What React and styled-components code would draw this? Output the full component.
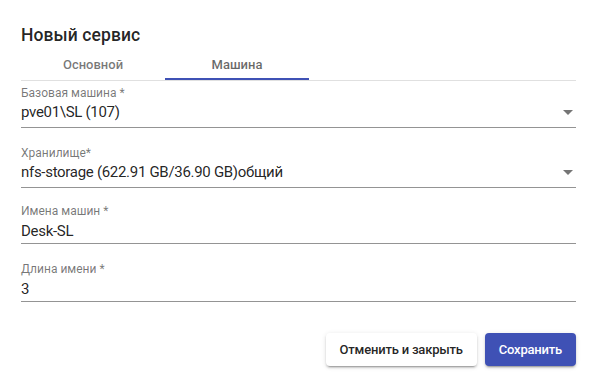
import React from "react";
import styled, { createGlobalStyle } from "styled-components";

const GlobalStyle = createGlobalStyle`
  html, body {
    margin: 0;
    padding: 0;
    background: #ffffff;
  }
  body {
    font-family: Roboto, "Noto Sans", Arial, sans-serif;
    color: rgba(0, 0, 0, 0.87);
  }
`;

const Dialog = styled.div`
  width: 598px;
  height: 380px;
  box-sizing: border-box;
  padding: 22px 22px 0 21px;
  display: flex;
  flex-direction: column;
  background: #ffffff;
`;

const Title = styled.h2`
  margin: 0;
  font-size: 17.5px;
  font-weight: 500;
  line-height: 26px;
  letter-spacing: 0.1px;
`;

const TabBar = styled.div`
  display: flex;
  height: 32px;
  border-bottom: 1px solid #e0e0e0;
`;

const Tab = styled.div`
  position: relative;
  width: 144px;
  display: flex;
  align-items: center;
  justify-content: center;
  font-size: 13px;
  font-weight: 500;
  color: ${(p) => (p.$active ? "rgba(0,0,0,0.6)" : "rgba(0,0,0,0.54)")};

  &::after {
    content: "";
    display: ${(p) => (p.$active ? "block" : "none")};
    position: absolute;
    left: 0;
    right: 0;
    bottom: 0;
    height: 2px;
    background: #3f51b5;
  }
`;

const Field = styled.div`
  margin-top: ${(p) => p.$gap}px;
  display: flex;
  flex-direction: column;
`;

const Label = styled.label`
  font-size: 12px;
  line-height: 14px;
  color: rgba(0, 0, 0, 0.54);
`;

const ValueRow = styled.div`
  display: flex;
  align-items: center;
  justify-content: space-between;
  padding: ${(p) => (p.$select ? "3px 0 6px" : "4px 0 3px")};
  border-bottom: 1px solid #949494;
  font-size: 15px;
  line-height: 18px;
  letter-spacing: -0.3px;
  color: rgba(0, 0, 0, 0.87);
`;

const Arrow = styled.span`
  width: 0;
  height: 0;
  margin-right: 3px;
  border-left: 5px solid transparent;
  border-right: 5px solid transparent;
  border-top: 5px solid #757575;
`;

const Actions = styled.div`
  margin-top: auto;
  margin-bottom: 14px;
  display: flex;
  justify-content: flex-end;
  gap: 8px;
`;

const Button = styled.button`
  height: 33px;
  padding: 0 14px;
  border: none;
  border-radius: 4px;
  font-family: Roboto, "Noto Sans", Arial, sans-serif;
  font-size: 13px;
  font-weight: 500;
  letter-spacing: -0.2px;
  cursor: pointer;
  background: ${(p) => (p.$primary ? "#3f51b5" : "#ffffff")};
  color: ${(p) => (p.$primary ? "#ffffff" : "rgba(0,0,0,0.87)")};
  box-shadow: 0 3px 1px -2px rgba(0, 0, 0, 0.2), 0 2px 2px 0 rgba(0, 0, 0, 0.14),
    0 1px 5px 0 rgba(0, 0, 0, 0.12);
`;

const fields = [
  { label: "Базовая машина *", value: "pve01\\SL (107)", select: true, gap: 5 },
  { label: "Хранилище*", value: "nfs-storage (622.91 GB/36.90 GB)общий", select: true, gap: 18 },
  { label: "Имена машин *", value: "Desk-SL", gap: 16 },
  { label: "Длина имени *", value: "3", gap: 18 },
];

export default function App() {
  return (
    <>
      <GlobalStyle />
      <Dialog>
        <Title>Новый сервис</Title>
        <TabBar>
          <Tab>Основной</Tab>
          <Tab $active>Машина</Tab>
        </TabBar>
        {fields.map((f) => (
          <Field key={f.label} $gap={f.gap}>
            <Label>{f.label}</Label>
            <ValueRow $select={f.select}>
              <span>{f.value}</span>
              {f.select && <Arrow />}
            </ValueRow>
          </Field>
        ))}
        <Actions>
          <Button>Отменить и закрыть</Button>
          <Button $primary>Сохранить</Button>
        </Actions>
      </Dialog>
    </>
  );
}
